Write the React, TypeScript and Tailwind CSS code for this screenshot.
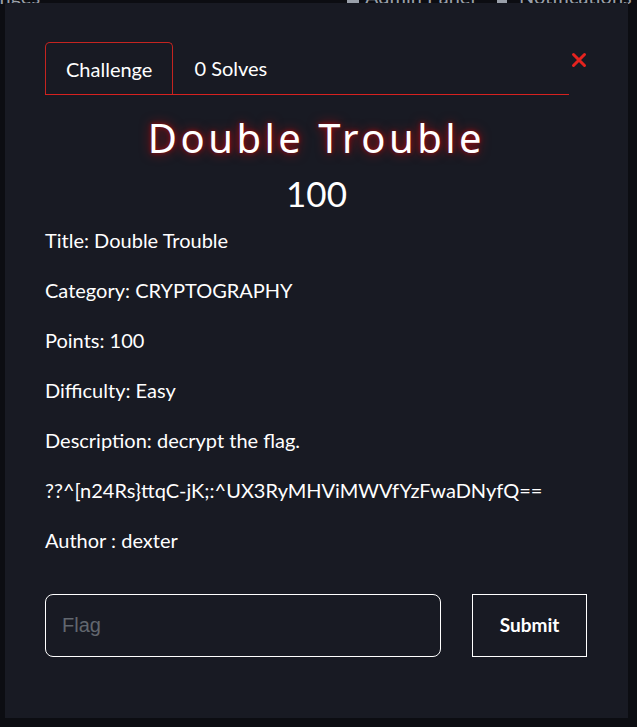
import React from "react";

const body = { fontFamily: "Lato, 'Open Sans', sans-serif" };

function CloseIcon() {
    return (
        <svg width="16" height="16" viewBox="0 0 16 16" aria-hidden="true">
            <path d="M2.5 2.5 L13.5 13.5 M13.5 2.5 L2.5 13.5" stroke="#e5231f" strokeWidth="3" strokeLinecap="round" />
        </svg>
    );
}

const details = [
    "Title: Double Trouble",
    "Category: CRYPTOGRAPHY",
    "Points: 100",
    "Difficulty: Easy",
    "Description: decrypt the flag.",
    "??^[n24Rs}ttqC-jK;:^UX3RyMHViMWVfYzFwaDNyfQ==",
    "Author : dexter",
];

export default function App() {
    return (
        <div className="relative h-[727px] w-[637px] overflow-hidden bg-[#0c0d12] text-white" style={body}>
            {/* page navbar behind the modal */}
            <div className="absolute left-0 right-0 top-[-16px] h-[24px] text-[20px] leading-[24px] text-[#9aa0aa]">
                <span className="absolute left-[-55px] top-0">Challenges</span>
                <span className="absolute left-[347px] top-0 flex items-center gap-[6px]">
                    <span className="inline-block h-[16px] w-[12px] bg-[#9aa0aa]" />
                    Admin Panel
                </span>
                <span className="absolute left-[497px] top-0 flex items-center gap-[12px]">
                    <span className="inline-block h-[16px] w-[10px] bg-[#9aa0aa]" />
                    Notifications
                </span>
            </div>

            <div className="relative mx-[5px] mt-[3px] h-[715px] w-[623px] bg-[#181a23] px-[40px] pt-[40px]">
                <div className="flex items-start">
                    <div className="flex h-[52px] flex-1 items-end border-b border-[#d6211f]">
                        <div className="flex h-[52px] items-center rounded-t-[5px] border border-b-0 border-[#c42420] px-[20px] text-[20px]">
                            Challenge
                        </div>
                        <div className="flex h-[52px] items-center px-[21px] text-[20px]">0 Solves</div>
                    </div>
                    <button className="ml-[1px] mt-[8px] flex h-[18px] w-[18px] items-center justify-center">
                        <CloseIcon />
                    </button>
                </div>

                <h1
                    className="mt-[19px] text-center text-[40px] leading-[48px] tracking-[3.5px] text-white"
                    style={{ fontFamily: "'Noto Sans', sans-serif", textShadow: "0 0 12px rgba(255,0,0,0.6), 0 0 4px rgba(255,0,0,0.5)" }}
                >
                    Double Trouble
                </h1>
                <div className="mt-[11px] text-center text-[35px] leading-[40px]">100</div>

                <div className="mt-[13px] flex flex-col gap-[22px] text-[20px] leading-[28px]">
                    {details.map((d) => (
                        <p key={d}>{d}</p>
                    ))}
                </div>

                <div className="mt-[40px] flex items-center gap-[31px] pr-[1px]">
                    <input
                        placeholder="Flag"
                        className="h-[63px] w-[396px] rounded-[8px] border border-white bg-transparent px-[16px] text-[20px] text-white outline-none placeholder:text-[#62676f]"
                        style={{ fontFamily: "'Liberation Sans', Arial, sans-serif" }}
                    />
                    <button className="h-[63px] w-[115px] border border-white text-[19px] font-bold">Submit</button>
                </div>
            </div>
        </div>
    );
}
